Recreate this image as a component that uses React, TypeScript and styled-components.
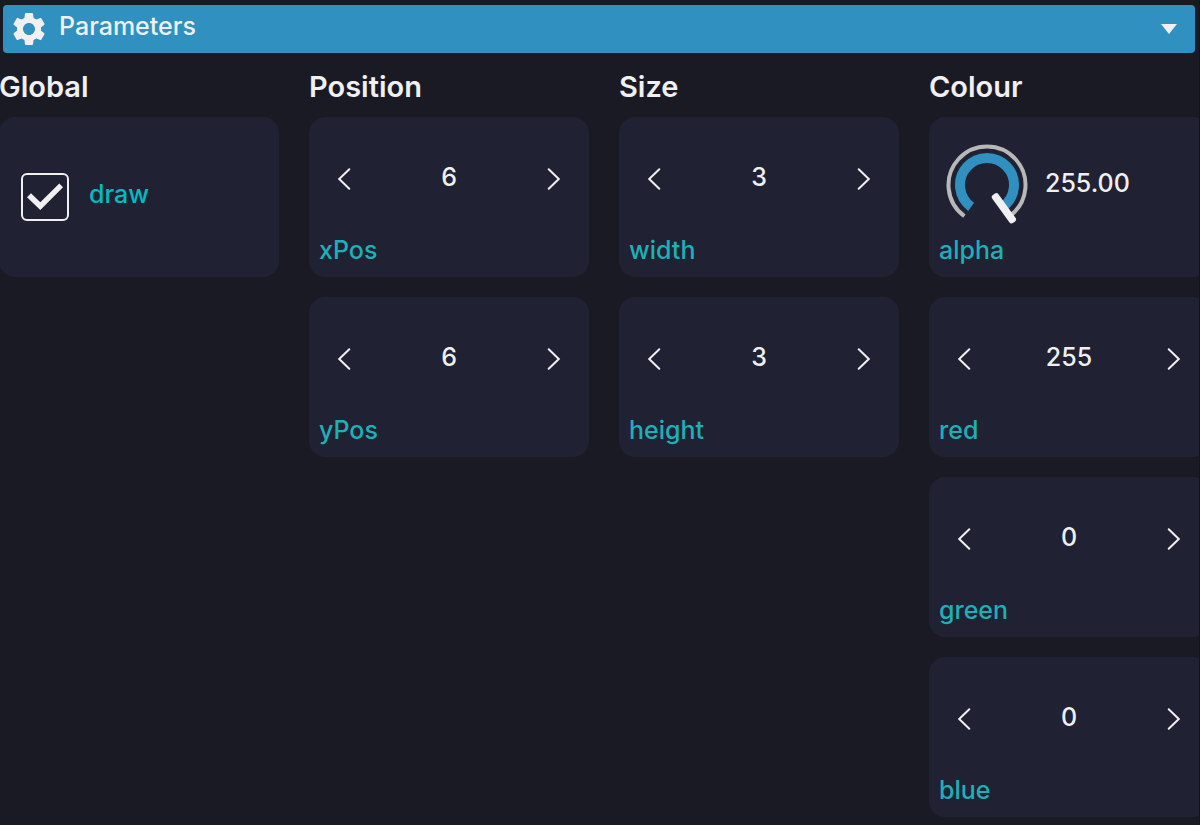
import React, { useId, useState } from "react";
import styled, { createGlobalStyle } from "styled-components";
import { MdSettings } from "react-icons/md";

const color = {
  page: "#1a1a24",
  edge: "#13131b",
  card: "#202132",
  accent: "#3090c0",
  text: "#f0f0f0",
  label: "#1eb0b8",
  bright: "#00bcc4",
  ring: "#b8b8b8",
};

const GlobalStyle = createGlobalStyle`
  *, *::before, *::after { box-sizing: border-box; }
  body {
    margin: 0;
    background: ${color.page};
    color: ${color.text};
    font-family: Inter, "Liberation Sans", sans-serif;
    font-size: 25px;
    font-weight: 500;
    line-height: 32px;
  }
  button { font: inherit; color: inherit; }
`;

const Panel = styled.main`
  min-height: 100vh;
  padding: 5px 0 8px;
  border-right: 1px solid ${color.edge};
  overflow: hidden;
`;

const PanelHeader = styled.button`
  display: flex;
  align-items: center;
  gap: 10px;
  width: calc(100% - 7px);
  height: 48px;
  margin: 0 4px 0 3px;
  padding: 0 18px 0 6px;
  border: 0;
  border-radius: 4px;
  background: ${color.accent};
  cursor: pointer;
`;

const PanelTitle = styled.span`
  flex: 1;
  padding-bottom: 6px;
  text-align: left;
`;

const Columns = styled.div`
  display: grid;
  grid-auto-flow: column;
  grid-auto-columns: 280px;
  align-items: start;
  gap: 30px;
  margin: 16px 0 0 -1px;
`;

const Column = styled.section`
  display: flex;
  flex-direction: column;
  gap: 20px;
`;

const ColumnTitle = styled.h2`
  margin: 0 0 -8px;
  font-size: 29px;
  font-weight: 600;
  line-height: 36px;
`;

const Card = styled.div`
  display: flex;
  flex-direction: column;
  justify-content: space-between;
  height: 160px;
  padding: 20px 10px 11px;
  border-radius: 16px;
  background: ${color.card};
`;

const ToggleCard = styled(Card)`
  flex-direction: row;
  align-items: center;
  justify-content: flex-start;
  gap: 20px;
  padding: 0 22px;
`;

const CheckWrap = styled.span`
  display: grid;
  > * { grid-area: 1 / 1; }
  svg { pointer-events: none; }
`;

const CheckBox = styled.input`
  appearance: none;
  width: 48px;
  height: 48px;
  margin: 0;
  border: 2px solid ${color.text};
  border-radius: 6px;
  cursor: pointer;
`;

const ToggleLabel = styled.label`
  padding-bottom: 6px;
  color: ${color.bright};
`;

const Name = styled.label`
  color: ${color.label};
`;

const StepRow = styled.div`
  display: flex;
  align-items: center;
  justify-content: space-between;
  height: 84px;
  padding: 0 10px;
`;

const StepButton = styled.button`
  display: grid;
  place-items: center;
  width: 30px;
  height: 40px;
  padding: 0;
  border: 0;
  background: none;
  cursor: pointer;
`;

const StepValue = styled.input`
  width: 100px;
  padding: 0 0 4px;
  border: 0;
  outline: 0;
  background: none;
  color: inherit;
  font: inherit;
  text-align: center;
`;

const KnobRow = styled.div`
  display: flex;
  align-items: center;
  gap: 16px;
  height: 96px;
  padding: 0 6px;
`;

const KnobWrap = styled.span`
  display: grid;
  > * { grid-area: 1 / 1; }
`;

const KnobInput = styled.input`
  width: 84px;
  height: 92px;
  margin: 0;
  opacity: 0;
  cursor: pointer;
`;

const KnobValue = styled.output`
  padding-bottom: 4px;
`;

function Toggle({ name }: { name: string }) {
  const id = useId();
  const [on, setOn] = useState(true);
  return (
    <ToggleCard>
      <CheckWrap>
        <CheckBox id={id} type="checkbox" checked={on} onChange={(e) => setOn(e.target.checked)} />
        {on && (
          <svg width="48" height="48" viewBox="0 0 48 48" aria-hidden="true">
            <path d="M6 24.3 10 20.3 19.3 29.2 38.3 10.6 42 14.2 19.3 37Z" fill={color.text} />
          </svg>
        )}
      </CheckWrap>
      <ToggleLabel htmlFor={id}>{name}</ToggleLabel>
    </ToggleCard>
  );
}

function Chevron({ back }: { back?: boolean }) {
  return (
    <svg width="14" height="24" viewBox="0 0 14 24" fill="none" stroke={color.text} strokeWidth="2" aria-hidden="true">
      <path d={back ? "M12.3 2.2 2.2 12 12.3 21.8" : "M1.7 2.2 11.8 12 1.7 21.8"} strokeLinecap="round" />
    </svg>
  );
}

function Stepper({ name, initial }: { name: string; initial: number }) {
  const id = useId();
  const [value, setValue] = useState(initial);
  return (
    <Card>
      <StepRow>
        <StepButton aria-label={`Decrease ${name}`} onClick={() => setValue(value - 1)}>
          <Chevron back />
        </StepButton>
        <StepValue
          id={id}
          inputMode="numeric"
          value={value}
          onChange={(e) => setValue(Number(e.target.value) || 0)}
        />
        <StepButton aria-label={`Increase ${name}`} onClick={() => setValue(value + 1)}>
          <Chevron />
        </StepButton>
      </StepRow>
      <Name htmlFor={id}>{name}</Name>
    </Card>
  );
}

const SWEEP = 288;

function arc(r: number, sweep: number) {
  const point = (deg: number) => {
    const a = ((36 + deg) * Math.PI) / 180;
    return `${(42 - r * Math.sin(a)).toFixed(2)} ${(46 + r * Math.cos(a)).toFixed(2)}`;
  };
  return `M${point(0)}A${r} ${r} 0 ${sweep > 180 ? 1 : 0} 1 ${point(sweep)}`;
}

function Knob({ name, initial, max }: { name: string; initial: number; max: number }) {
  const id = useId();
  const [value, setValue] = useState(initial);
  const turn = (value / max) * SWEEP;
  return (
    <Card>
      <KnobRow>
        <KnobWrap>
          <svg width="84" height="92" viewBox="0 0 84 92" fill="none" aria-hidden="true">
            <path d={arc(38.5, SWEEP)} stroke={color.ring} strokeWidth="4" />
            <path d={arc(27, turn)} stroke={color.accent} strokeWidth="10" />
            <rect
              x="38.2"
              y="57.5"
              width="7.6"
              height="34.5"
              rx="2.8"
              fill={color.text}
              transform={`rotate(${36 + turn} 42 46)`}
            />
          </svg>
          <KnobInput
            id={id}
            type="range"
            min={0}
            max={max}
            value={value}
            onChange={(e) => setValue(Number(e.target.value))}
          />
        </KnobWrap>
        <KnobValue htmlFor={id}>{value.toFixed(2)}</KnobValue>
      </KnobRow>
      <Name htmlFor={id}>{name}</Name>
    </Card>
  );
}

export default function App() {
  const [open, setOpen] = useState(true);
  return (
    <>
      <GlobalStyle />
      <Panel>
        <PanelHeader aria-expanded={open} onClick={() => setOpen(!open)}>
          <MdSettings size={40} aria-hidden="true" />
          <PanelTitle>Parameters</PanelTitle>
          <svg width="16" height="10" viewBox="0 0 16 10" aria-hidden="true">
            <path d="M0 0H16L8 10Z" fill={color.text} />
          </svg>
        </PanelHeader>
        {open && (
          <Columns>
            <Column>
              <ColumnTitle>Global</ColumnTitle>
              <Toggle name="draw" />
            </Column>
            <Column>
              <ColumnTitle>Position</ColumnTitle>
              <Stepper name="xPos" initial={6} />
              <Stepper name="yPos" initial={6} />
            </Column>
            <Column>
              <ColumnTitle>Size</ColumnTitle>
              <Stepper name="width" initial={3} />
              <Stepper name="height" initial={3} />
            </Column>
            <Column>
              <ColumnTitle>Colour</ColumnTitle>
              <Knob name="alpha" initial={255} max={255} />
              <Stepper name="red" initial={255} />
              <Stepper name="green" initial={0} />
              <Stepper name="blue" initial={0} />
            </Column>
          </Columns>
        )}
      </Panel>
    </>
  );
}
